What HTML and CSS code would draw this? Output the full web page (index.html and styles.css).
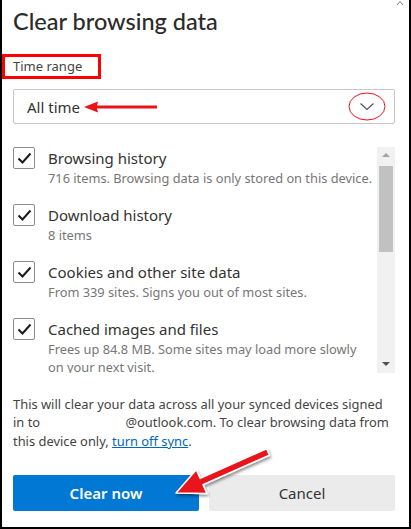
FILE: index.html
```html
<!DOCTYPE html>
<html>

<head>
    <link rel="stylesheet" href="styles.css">
</head>
<body>
    <div class="frame">
        <svg class="top-caret" width="8" height="6" viewBox="0 0 8 6">
            <polyline points="1,5 4,1.5 7,5" fill="none" stroke="#777" stroke-width="1"/>
        </svg>

        <h1 class="title">Clear browsing data</h1>

        <div class="range-label">Time range</div>

        <div class="select">
            <span class="select-text">All time</span>
            <svg class="small-arrow" width="76" height="14" viewBox="0 0 76 14">
                <polygon points="1,7 15,1.5 14,5.6 74,5.6 74,8.4 14,8.4 15,12.5" fill="#e8141a"/>
            </svg>
            <svg class="chevron" width="40" height="31" viewBox="0 0 40 31">
                <ellipse cx="20" cy="15.5" rx="18" ry="13.5" fill="none" stroke="#e8141a" stroke-width="1"/>
                <polyline points="13.5,12.5 20,18.5 26.5,12.5" fill="none" stroke="#555" stroke-width="1.2"/>
            </svg>
        </div>

        <div class="list-wrap">
            <div class="list">
                <div class="item">
                    <div class="check">
                        <svg width="15" height="12" viewBox="0 0 15 12"><polyline points="1.5,6.5 5.5,10.5 13.5,1.5" fill="none" stroke="#1a1a1a" stroke-width="2"/></svg>
                    </div>
                    <div class="item-body">
                        <div class="item-title">Browsing history</div>
                        <div class="item-sub">716 items. Browsing data is only stored on this device.</div>
                    </div>
                </div>
                <div class="item">
                    <div class="check">
                        <svg width="15" height="12" viewBox="0 0 15 12"><polyline points="1.5,6.5 5.5,10.5 13.5,1.5" fill="none" stroke="#1a1a1a" stroke-width="2"/></svg>
                    </div>
                    <div class="item-body">
                        <div class="item-title">Download history</div>
                        <div class="item-sub">8 items</div>
                    </div>
                </div>
                <div class="item">
                    <div class="check">
                        <svg width="15" height="12" viewBox="0 0 15 12"><polyline points="1.5,6.5 5.5,10.5 13.5,1.5" fill="none" stroke="#1a1a1a" stroke-width="2"/></svg>
                    </div>
                    <div class="item-body">
                        <div class="item-title">Cookies and other site data</div>
                        <div class="item-sub">From 339 sites. Signs you out of most sites.</div>
                    </div>
                </div>
                <div class="item">
                    <div class="check">
                        <svg width="15" height="12" viewBox="0 0 15 12"><polyline points="1.5,6.5 5.5,10.5 13.5,1.5" fill="none" stroke="#1a1a1a" stroke-width="2"/></svg>
                    </div>
                    <div class="item-body">
                        <div class="item-title">Cached images and files</div>
                        <div class="item-sub">Frees up 84.8 MB. Some sites may load more slowly on your next visit.</div>
                    </div>
                </div>
            </div>
            <div class="scrollbar">
                <div class="sb-up"></div>
                <div class="sb-thumb"></div>
                <div class="sb-space"></div>
                <div class="sb-down"></div>
            </div>
        </div>

        <p class="note">This will clear your data across all your synced devices signed in to <span class="hidden-mail"></span>@outlook.com. To clear browsing data from this device only, <a href="#">turn off sync</a>.</p>

        <div class="buttons">
            <button class="btn primary">Clear now</button>
            <button class="btn">Cancel</button>
        </div>

        <svg class="big-arrow" width="411" height="529" viewBox="0 0 411 529">
            <defs>
                <filter id="shadow" x="-20%" y="-20%" width="140%" height="160%">
                    <feDropShadow dx="1" dy="2" stdDeviation="1.5" flood-color="#000" flood-opacity="0.45"/>
                </filter>
            </defs>
            <polygon filter="url(#shadow)" points="176,493 196.3,469.7 200.2,478.4 266.6,448.8 269.4,455.2 203,484.8 206.9,493.5" fill="#e8141a" stroke="#fff" stroke-width="1.5" stroke-linejoin="round"/>
        </svg>
    </div>
</body>

</html>
```

FILE: styles.css
```css
* {
    margin: 0;
    box-sizing: border-box;
}

body {
    font-family: "Noto Sans", "Open Sans", sans-serif;
    color: #333;
    background: #fff;
}

.frame {
    position: relative;
    width: 411px;
    height: 529px;
    border-left: 2px solid #000;
    border-right: 2px solid #000;
    border-bottom: 2px solid #000;
    padding: 0 14px 0 11px;
    overflow: hidden;
}

.top-caret {
    position: absolute;
    top: 0;
    right: 5px;
}

.title {
    font-family: "Lato", "Noto Sans", sans-serif;
    font-size: 23.5px;
    font-weight: 500;
    line-height: 30px;
    padding-top: 6px;
    color: #2b2b2b;
}

.range-label {
    display: inline-block;
    margin: 18px 0 0 -11px;
    width: 99px;
    height: 25px;
    border: 3px solid #f00;
    padding-left: 8px;
    font-size: 13px;
    line-height: 18px;
    color: #444;
}

.select {
    display: flex;
    align-items: center;
    height: 35px;
    margin-top: 10px;
    border: 1px solid #c8c8c8;
    border-radius: 2px;
    padding: 0 7px 0 13px;
}

.select-text {
    font-size: 15px;
    color: #333;
}

.small-arrow {
    margin-left: 3px;
}

.chevron {
    margin-left: auto;
}

.list-wrap {
    display: flex;
    height: 226px;
    margin-top: 23px;
}

.list {
    flex: 1;
    overflow: hidden;
}

.item {
    display: flex;
    height: 57px;
}

.check {
    width: 22px;
    height: 22px;
    border: 1px solid #8c8c8c;
    border-radius: 2px;
    display: flex;
    align-items: center;
    justify-content: center;
    flex-shrink: 0;
}

.item-body {
    padding-left: 13px;
}

.item-title {
    font-size: 15px;
    line-height: 22px;
    color: #333;
}

.item-sub {
    font-size: 12.8px;
    line-height: 18px;
    color: #767676;
}

.scrollbar {
    width: 18px;
    margin-left: 2px;
    background: #f1f1f1;
    display: flex;
    flex-direction: column;
}

.sb-up,
.sb-down {
    height: 17px;
    position: relative;
}

.sb-up::after,
.sb-down::after {
    content: "";
    position: absolute;
    left: 5px;
    top: 6px;
    border-left: 4px solid transparent;
    border-right: 4px solid transparent;
}

.sb-up::after {
    border-bottom: 4px solid #a3a3a3;
}

.sb-down::after {
    border-top: 4px solid #505050;
}

.sb-thumb {
    height: 86px;
    margin: 2px 2px 0;
    background: #c1c1c1;
}

.sb-space {
    flex: 1;
}

.note {
    margin-top: 22px;
    font-size: 12.9px;
    line-height: 18.4px;
    color: #444;
}

.hidden-mail {
    display: inline-block;
    width: 82px;
}

.note a {
    color: #0067c0;
}

.buttons {
    display: flex;
    gap: 10px;
    margin-top: 25px;
}

.btn {
    flex: 1;
    height: 36px;
    border: none;
    border-radius: 2px;
    font-family: "Noto Sans", "Open Sans", sans-serif;
    font-size: 15px;
    background: #ebebeb;
    color: #333;
}

.btn.primary {
    background: #0078d4;
    color: #fff;
    font-weight: 600;
}

.big-arrow {
    position: absolute;
    left: -2px;
    top: 0;
    pointer-events: none;
}
```
